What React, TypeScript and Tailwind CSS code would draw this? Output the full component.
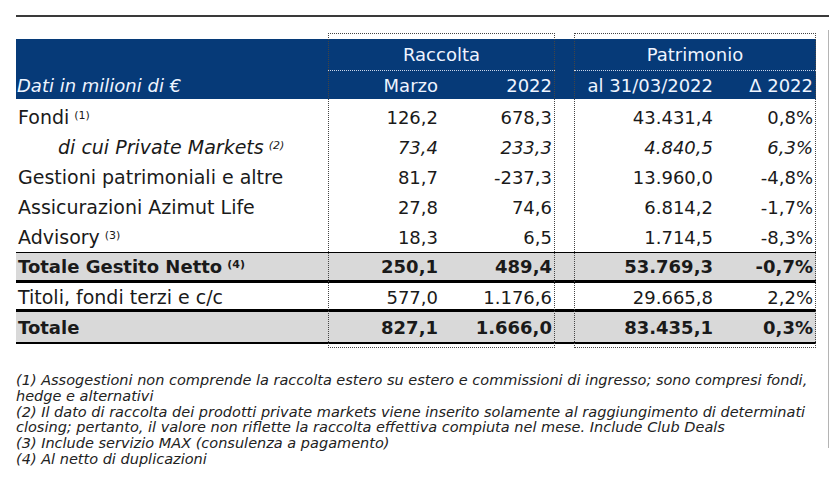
const cols = 'grid grid-cols-[312px_113px_114px_19px_142px_100px]'

type Row = {
  label: string
  note?: string
  v: [string, string, string, string]
  italic?: boolean
}

const rows: Row[] = [
  { label: 'Fondi', note: '(1)', v: ['126,2', '678,3', '43.431,4', '0,8%'] },
  { label: 'di cui Private Markets', note: '(2)', v: ['73,4', '233,3', '4.840,5', '6,3%'], italic: true },
  { label: 'Gestioni patrimoniali e altre', v: ['81,7', '-237,3', '13.960,0', '-4,8%'] },
  { label: 'Assicurazioni Azimut Life', v: ['27,8', '74,6', '6.814,2', '-1,7%'] },
  { label: 'Advisory', note: '(3)', v: ['18,3', '6,5', '1.714,5', '-8,3%'] },
]

const notes = [
  '(1) Assogestioni non comprende la raccolta estero su estero e commissioni di ingresso; sono compresi fondi,',
  'hedge e alternativi',
  '(2) Il dato di raccolta dei prodotti private markets viene inserito solamente al raggiungimento di determinati',
  'closing; pertanto, il valore non riflette la raccolta effettiva compiuta nel mese. Include Club Deals',
  '(3) Include servizio MAX (consulenza a pagamento)',
  '(4) Al netto di duplicazioni',
]

function Values({ v, italic }: { v: Row['v']; italic?: boolean }) {
  const cell = `text-right pr-[3px] ${italic ? 'italic' : ''}`
  return (
    <>
      <div className={cell}>{v[0]}</div>
      <div className={cell}>{v[1]}</div>
      <div />
      <div className={cell}>{v[2]}</div>
      <div className={cell}>{v[3]}</div>
    </>
  )
}

export default function App() {
  return (
    <div className="w-[829px] h-[483px] bg-white overflow-hidden text-[#1a1a1a] font-['DejaVu_Sans',sans-serif] pt-[15px]">
      <div className="ml-4 h-[2px] bg-[#3a3a3a]" />

      <div className="flex">
        <div className="ml-4 w-[800px]">
          {/* Table */}
          <div className="relative mt-[16px] pt-[6px] pb-[4px] text-[18px]">
            {/* Header */}
            <div className="bg-[#063a78] text-[#eef4ff]">
              <div className={`${cols} h-[32px] items-center`}>
                <div />
                <div className="col-span-2 border-b border-dotted border-[#c9d6ea] h-full flex items-center justify-center">
                  Raccolta
                </div>
                <div />
                <div className="col-span-2 border-b border-dotted border-[#c9d6ea] h-full flex items-center justify-center">
                  Patrimonio
                </div>
              </div>
              <div className={`${cols} h-[28px] items-center`}>
                <div className="italic pl-[1px]">Dati in milioni di €</div>
                <div className="text-right pr-[3px]">Marzo</div>
                <div className="text-right pr-[3px]">2022</div>
                <div />
                <div className="text-right pr-[3px]">al 31/03/2022</div>
                <div className="text-right pr-[3px]">Δ 2022</div>
              </div>
            </div>

            {/* Body */}
            <div className="pt-[3px]">
              {rows.map((r) => (
                <div key={r.label} className={`${cols} h-[30px] items-center`}>
                  <div className={`text-[19px] ${r.italic ? 'italic pl-[42px]' : 'pl-[2px]'}`}>
                    {r.label}
                    {r.note && <sup className="text-[11px] ml-[5px] -top-[0.45em]">{r.note}</sup>}
                  </div>
                  <Values v={r.v} italic={r.italic} />
                </div>
              ))}

              <div className={`${cols} h-[31px] items-center bg-[#d9d9d9] border-t border-b-[3px] border-black font-bold`}>
                <div className="pl-[2px]">
                  Totale Gestito Netto
                  <sup className="text-[11px] ml-[5px] -top-[0.45em]">(4)</sup>
                </div>
                <Values v={['250,1', '489,4', '53.769,3', '-0,7%']} />
              </div>
              <div className={`${cols} h-[29px] items-center border-b-[3px] border-black`}>
                <div className="pl-[2px] text-[19px]">Titoli, fondi terzi e c/c</div>
                <Values v={['577,0', '1.176,6', '29.665,8', '2,2%']} />
              </div>
              <div className={`${cols} h-[32px] items-center bg-[#d9d9d9] border-b-2 border-black font-bold`}>
                <div className="pl-[2px]">Totale</div>
                <Values v={['827,1', '1.666,0', '83.435,1', '0,3%']} />
              </div>
            </div>

            {/* Dotted column boxes */}
            <div className="absolute top-0 bottom-0 left-[312px] w-[227px] border border-dotted border-[#444]" />
            <div className="absolute top-0 bottom-0 left-[558px] w-[242px] border border-dotted border-[#444]" />
          </div>

          {/* Footnotes */}
          <div className="mt-[25px] italic text-[14.5px] leading-[15.8px] text-[#222]">
            {notes.map((n) => (
              <div key={n} className="whitespace-nowrap">{n}</div>
            ))}
          </div>
        </div>

        <div className="ml-[12px] mt-[13px] w-px h-[418px] bg-[#b4b4b4]" />
      </div>
    </div>
  )
}
